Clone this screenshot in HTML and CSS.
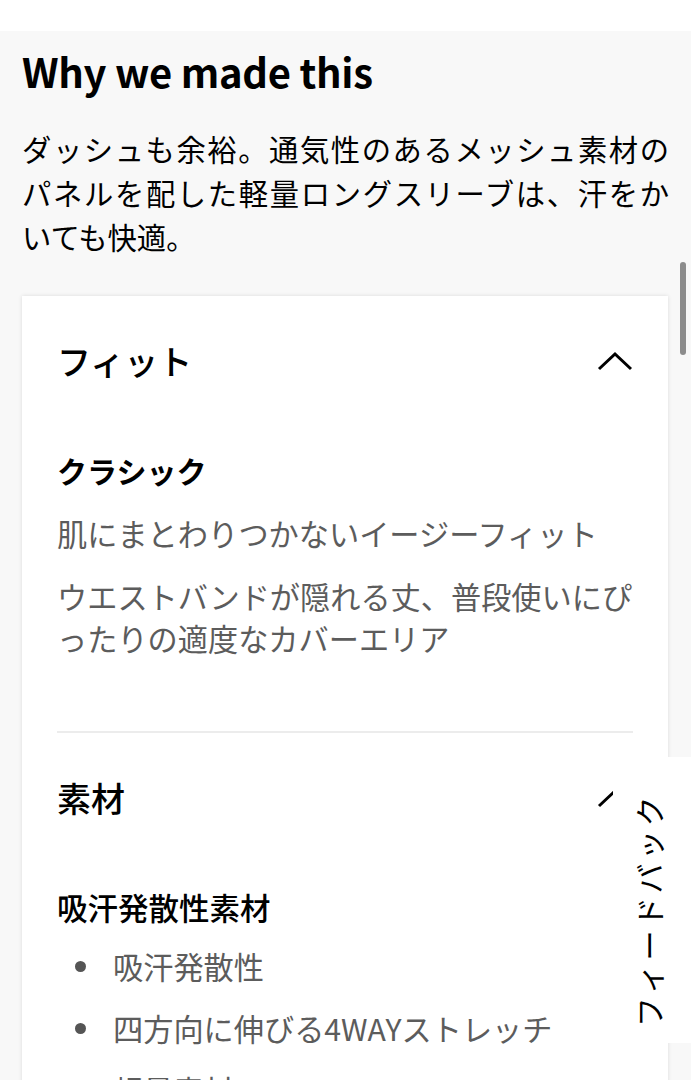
FILE: index.html
```html
<!DOCTYPE html>
<html lang="ja">
<head>
<meta charset="utf-8">
<link rel="stylesheet" href="styles.css">
</head>
<body>
<div class="topbar"></div>
<main class="page">
  <h1 class="title">Why we made this</h1>
  <p class="intro">
    <span class="jline">ダッシュも余裕。通気性のあるメッシュ素材の</span>
    <span class="jline">パネルを配した軽量ロングスリーブは、汗をか</span>
    <span class="jline last">いても快適。</span>
  </p>

  <section class="card">
    <div class="acc">
      <div class="acc-head">
        <h2 class="acc-title">フィット</h2>
        <svg class="chev" viewBox="0 0 36 20" width="36" height="20"><path d="M2 18 L18 3 L34 18" fill="none" stroke="#000" stroke-width="3"/></svg>
      </div>
      <div class="acc-body">
        <h3 class="sub">クラシック</h3>
        <p class="desc">肌にまとわりつかないイージーフィット</p>
        <p class="desc">ウエストバンドが隠れる丈、普段使いにぴったりの適度なカバーエリア</p>
      </div>
    </div>
    <div class="acc">
      <div class="acc-head">
        <h2 class="acc-title">素材</h2>
        <svg class="chev" viewBox="0 0 36 20" width="36" height="20"><path d="M2 18 L18 3 L34 18" fill="none" stroke="#000" stroke-width="3"/></svg>
      </div>
      <div class="acc-body">
        <h3 class="sub sub-m">吸汗発散性素材</h3>
        <ul class="bullets">
          <li>吸汗発散性</li>
          <li>四方向に伸びる4WAYストレッチ</li>
          <li>軽量素材</li>
        </ul>
      </div>
    </div>
  </section>
</main>

<div class="scrollbar"></div>
<div class="feedback"><span class="feedback-text">フィードバック</span></div>
</body>
</html>
```

FILE: styles.css
```css
html, body {
  margin: 0;
  padding: 0;
}
body {
  background: #f8f8f8;
  font-family: "Noto Sans CJK JP", "Noto Sans", sans-serif;
  color: #000;
  height: 1080px;
  overflow: hidden;
}
.topbar {
  height: 31px;
  background: #ffffff;
}
.page {
  padding: 12px 22px 0 22px;
}
.title {
  margin: 0;
  font-size: 40px;
  font-weight: 700;
  line-height: 56px;
  letter-spacing: -0.3px;
}
.intro {
  margin: 27px 0 0 0;
  font-size: 29.3px;
  line-height: 44px;
  width: 647px;
}
.jline {
  display: block;
  text-align: justify;
  text-align-last: justify;
}
.jline.last {
  text-align-last: auto;
}
.card {
  margin-top: 38px;
  background: #fff;
  box-shadow: 0 0 4px rgba(0, 0, 0, 0.12);
  padding: 0 35px;
  width: 576px;
}
.acc + .acc {
  border-top: 2px solid #ececec;
}
.acc-head {
  display: flex;
  align-items: center;
  justify-content: space-between;
  height: 130px;
}
.acc-title {
  margin: 0;
  font-size: 34px;
  font-weight: 500;
  line-height: 40px;
}
.chev {
  display: block;
  margin-right: 0;
}
.acc-body {
  padding-top: 23px;
  padding-bottom: 72px;
}
.sub {
  margin: 0;
  font-size: 30px;
  font-weight: 700;
  line-height: 42px;
}
.sub-m {
  font-size: 30.5px;
  font-weight: 500;
}
.desc {
  margin: 21px 0 0 0;
  font-size: 30.2px;
  line-height: 42px;
  color: #5c5c5c;
}
.bullets {
  list-style: none;
  margin: 17px 0 0 0;
  padding: 0;
}
.bullets li {
  display: flex;
  align-items: center;
  font-size: 30.2px;
  line-height: 42px;
  color: #5c5c5c;
  margin-bottom: 20px;
}
.bullets li::before {
  content: "";
  width: 11px;
  height: 11px;
  border-radius: 50%;
  background: #555;
  margin-left: 18px;
  margin-right: 27px;
  flex: none;
}
.scrollbar {
  position: fixed;
  left: 680px;
  top: 262px;
  width: 6px;
  height: 93px;
  border-radius: 3px;
  background: #8c8c8c;
}
.feedback {
  position: fixed;
  left: 613px;
  top: 757px;
  width: 78px;
  height: 286px;
  background: #fff;
  display: flex;
  align-items: center;
  justify-content: center;
}
.feedback-text {
  display: block;
  transform: translate(-4px, 10px) rotate(-90deg);
  white-space: nowrap;
  font-size: 30px;
  letter-spacing: 3.5px;
  color: #000;
}
```
